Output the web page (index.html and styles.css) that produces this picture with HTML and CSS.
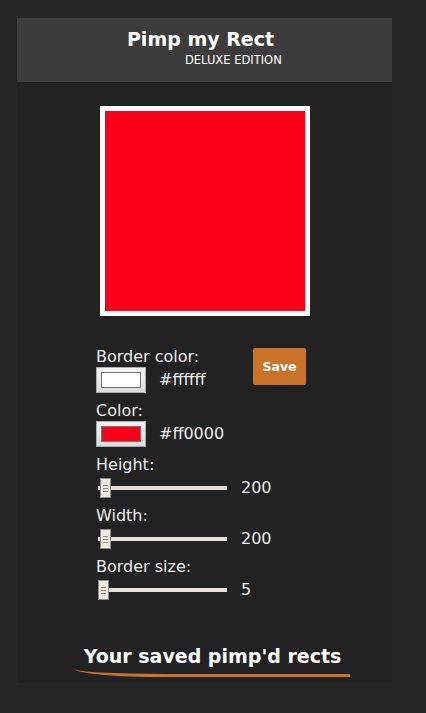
FILE: index.html
```html
<!DOCTYPE html>
<html>
<head>
<meta charset="utf-8">
<link rel="stylesheet" href="styles.css">
</head>
<body>
<div class="app">
  <header class="header">
    <h1 class="title">Pimp my Rect</h1>
    <div class="subtitle">DELUXE EDITION</div>
  </header>
  <main class="main">
    <div class="preview">
      <div class="rect"></div>
    </div>
    <div class="controls">
      <div class="fields">
        <div class="field">
          <div class="label">Border color:</div>
          <div class="color-row">
            <div class="swatch"><span class="swatch-fill white"></span></div>
            <span class="value">#ffffff</span>
          </div>
        </div>
        <div class="field">
          <div class="label">Color:</div>
          <div class="color-row">
            <div class="swatch"><span class="swatch-fill red"></span></div>
            <span class="value">#ff0000</span>
          </div>
        </div>
        <div class="field">
          <div class="label">Height:</div>
          <div class="slider-row">
            <div class="slider"><span class="track"></span><span class="thumb pos-a"><i></i><i></i><i></i></span></div>
            <span class="value">200</span>
          </div>
        </div>
        <div class="field">
          <div class="label">Width:</div>
          <div class="slider-row">
            <div class="slider"><span class="track"></span><span class="thumb pos-a"><i></i><i></i><i></i></span></div>
            <span class="value">200</span>
          </div>
        </div>
        <div class="field">
          <div class="label">Border size:</div>
          <div class="slider-row">
            <div class="slider"><span class="track"></span><span class="thumb pos-b"><i></i><i></i><i></i></span></div>
            <span class="value">5</span>
          </div>
        </div>
      </div>
      <button class="save">Save</button>
    </div>
    <h2 class="saved">Your saved pimp'd rects</h2>
  </main>
</div>
</body>
</html>
```

FILE: styles.css
```css
* { box-sizing: border-box; }
html, body { margin: 0; padding: 0; }
body {
  background: #262626;
  font-family: "DejaVu Sans", Verdana, sans-serif;
  color: #eeeeee;
  padding: 18px 0 0 17px;
}
.app {
  width: 375px;
  background: #222222;
}
.header {
  background: #3c3c3c;
  height: 64px;
  padding-top: 9px;
}
.title {
  margin: 0;
  font-size: 19px;
  font-weight: bold;
  line-height: 24px;
  text-align: center;
  color: #ffffff;
  padding-right: 8px;
}
.subtitle {
  font-size: 11.5px;
  line-height: 12px;
  margin-top: 3px;
  padding-left: 168px;
  color: #ffffff;
}
.main {
  padding: 24px 0 6px;
}
.preview {
  display: flex;
  justify-content: center;
}
.rect {
  width: 210px;
  height: 210px;
  border: 5px solid #ffffff;
  background: #fb0019;
  margin-left: 1px;
}
.controls {
  display: flex;
  align-items: flex-start;
  margin-top: 32px;
  padding-left: 79px;
}
.fields {
  width: 157px;
}
.field {
  margin-bottom: 9px;
}
.label {
  font-size: 16px;
  line-height: 18px;
  color: #eeeeee;
}
.color-row {
  display: flex;
  align-items: center;
  margin-top: 1px;
}
.swatch {
  width: 50px;
  height: 26px;
  border: 1px solid #adadad;
  background: linear-gradient(#f4f4f4, #dcdcdc);
  display: flex;
  align-items: center;
  justify-content: center;
  flex: none;
}
.swatch-fill {
  width: 40px;
  height: 16px;
  border: 1px solid #777777;
}
.swatch-fill.white { background: #ffffff; }
.swatch-fill.red { background: #fb0019; }
.value {
  font-size: 16px;
  line-height: 18px;
  margin-left: 13px;
  color: #eeeeee;
  white-space: nowrap;
}
.slider-row {
  display: flex;
  align-items: center;
  margin-top: 4px;
  margin-bottom: 2px;
}
.slider {
  position: relative;
  width: 131px;
  height: 20px;
  flex: none;
}
.track {
  position: absolute;
  left: 2px;
  right: 0;
  top: 8px;
  height: 4px;
  background: #e6e2da;
}
.thumb {
  position: absolute;
  top: 0;
  width: 11px;
  height: 20px;
  background: #eeeae2;
  border: 1px solid #8c8a86;
  display: flex;
  flex-direction: column;
  justify-content: center;
  align-items: center;
  gap: 2px;
}
.thumb i {
  display: block;
  width: 5px;
  height: 1px;
  background: #8c8a86;
}
.pos-a { left: 4px; }
.pos-b { left: 2px; }
.slider-row .value { margin-left: 14px; }
.save {
  margin-top: 0;
  width: 53px;
  height: 37px;
  border: none;
  border-radius: 2px;
  background: #c8732a;
  color: #ffffff;
  font-family: "DejaVu Sans", Verdana, sans-serif;
  font-weight: bold;
  font-size: 12.5px;
  padding: 0;
  flex: none;
}
.saved {
  position: relative;
  margin: 35px auto 0;
  width: 275px;
  left: 8px;
  text-align: center;
  font-size: 19px;
  line-height: 24px;
  font-weight: bold;
  color: #ffffff;
  padding-bottom: 6px;
  border-bottom: 3px solid #c8732a;
  border-bottom-left-radius: 90px 8px;
  white-space: nowrap;
}
```
